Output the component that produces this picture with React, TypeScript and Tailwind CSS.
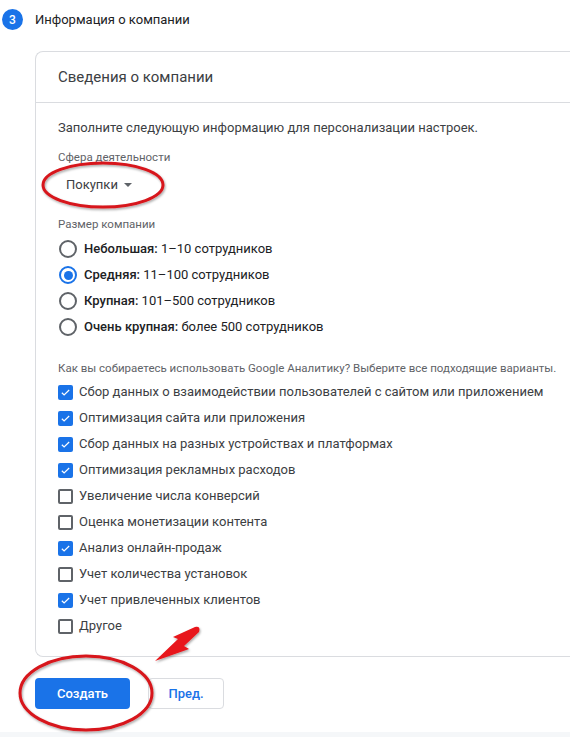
import React from "react";

const sizes = [
  { bold: "Небольшая:", rest: " 1–10 сотрудников", checked: false },
  { bold: "Средняя:", rest: " 11–100 сотрудников", checked: true },
  { bold: "Крупная:", rest: " 101–500 сотрудников", checked: false },
  { bold: "Очень крупная:", rest: " более 500 сотрудников", checked: false },
];

const goals = [
  { label: "Сбор данных о взаимодействии пользователей с сайтом или приложением", checked: true },
  { label: "Оптимизация сайта или приложения", checked: true },
  { label: "Сбор данных на разных устройствах и платформах", checked: true },
  { label: "Оптимизация рекламных расходов", checked: true },
  { label: "Увеличение числа конверсий", checked: false },
  { label: "Оценка монетизации контента", checked: false },
  { label: "Анализ онлайн-продаж", checked: true },
  { label: "Учет количества установок", checked: false },
  { label: "Учет привлеченных клиентов", checked: true },
  { label: "Другое", checked: false },
];

function Radio({ checked }: { checked: boolean }) {
  return (
    <span
      className={`flex h-[18px] w-[18px] shrink-0 items-center justify-center rounded-full border-2 ${
        checked ? "border-[#1a73e8]" : "border-[#5f6368]"
      }`}
    >
      {checked && <span className="h-[9px] w-[9px] rounded-full bg-[#1a73e8]" />}
    </span>
  );
}

function Checkbox({ checked }: { checked: boolean }) {
  if (checked) {
    return (
      <span className="flex h-[15px] w-[15px] shrink-0 items-center justify-center rounded-[2px] bg-[#1a73e8]">
        <svg width="11" height="11" viewBox="0 0 24 24" fill="none">
          <path d="M4 12.5l5 5L20 6.5" stroke="white" strokeWidth="2.6" />
        </svg>
      </span>
    );
  }
  return <span className="h-[15px] w-[15px] shrink-0 rounded-[2px] border-2 border-[#5f6368]" />;
}

export default function App() {
  return (
    <div
      className="relative h-[737px] w-[570px] overflow-hidden bg-white text-[#202124]"
      style={{ fontFamily: "Roboto, 'Noto Sans', sans-serif" }}
    >
      {/* Step header */}
      <div className="flex items-center pt-[9px]">
        <span className="ml-[2px] flex h-[21px] w-[21px] items-center justify-center rounded-full bg-[#1a73e8] text-[12px] font-medium text-white">
          3
        </span>
        <span className="ml-[12px] text-[13px] text-[#202124]">Информация о компании</span>
      </div>

      {/* Card */}
      <div className="ml-[35px] mt-[21px] w-[560px] rounded-l-[8px] border border-r-0 border-[#dadce0]">
        <div className="flex h-[51px] items-center border-b border-[#dadce0] pl-[22px] pt-[1px] text-[15px] text-[#3c4043]">
          Сведения о компании
        </div>

        <div className="pl-[22px] pt-[16px] pb-[21px]">
          <p className="text-[13px] leading-[18px] text-[#3c4043]">
            Заполните следующую информацию для персонализации настроек.
          </p>

          <p className="mt-[13px] text-[11.5px] leading-[14px] text-[#5f6368]">Сфера деятельности</p>
          <div className="ml-[8px] mt-[12px] flex items-center gap-[6px] text-[13px] leading-[18px] text-[#3c4043]">
            Покупки
            <svg width="8" height="5" viewBox="0 0 8 5">
              <path d="M0 0h8L4 4z" fill="#5f6368" />
            </svg>
          </div>

          <p className="mt-[23px] text-[11.5px] leading-[14px] text-[#5f6368]">Размер компании</p>
          <div className="mt-[9px] flex flex-col gap-[8px]">
            {sizes.map((s) => (
              <div key={s.bold} className="flex h-[18px] items-center gap-[7px] pl-[1px] text-[13px] text-[#202124]">
                <Radio checked={s.checked} />
                <span>
                  <span className="font-medium">{s.bold}</span>
                  {s.rest}
                </span>
              </div>
            ))}
          </div>

          <p className="mt-[25px] text-[11.5px] leading-[14px] text-[#5f6368]">
            Как вы собираетесь использовать Google Аналитику? Выберите все подходящие варианты.
          </p>
          <div className="mt-[8px] flex flex-col gap-[8px]">
            {goals.map((g) => (
              <div key={g.label} className="flex h-[18px] items-center gap-[6px] text-[13px] text-[#3c4043]">
                <Checkbox checked={g.checked} />
                <span>{g.label}</span>
              </div>
            ))}
          </div>
        </div>
      </div>

      {/* Buttons */}
      <div className="ml-[35px] mt-[21px] flex gap-[18px]">
        <button className="h-[31px] w-[95px] rounded-[4px] bg-[#1a73e8] text-[13px] font-medium text-white">
          Создать
        </button>
        <button className="h-[31px] w-[76px] rounded-[4px] border border-[#dadce0] bg-white text-[13px] font-medium text-[#1a73e8]">
          Пред.
        </button>
      </div>

      <div className="absolute bottom-0 left-0 h-[5px] w-full bg-[#f5f7f9]" />

      {/* Red annotations */}
      <svg className="pointer-events-none absolute left-0 top-0" width="570" height="737">
        <defs>
          <filter id="sh" x="-20%" y="-20%" width="140%" height="140%">
            <feDropShadow dx="1" dy="1.5" stdDeviation="1" floodColor="#000" floodOpacity="0.35" />
          </filter>
        </defs>
        <ellipse cx="103" cy="185" rx="60" ry="22" fill="none" stroke="#d7141a" strokeWidth="3" filter="url(#sh)" />
        <ellipse cx="86" cy="693" rx="66" ry="37" fill="none" stroke="#d7141a" strokeWidth="3" filter="url(#sh)" />
        <path
          d="M155 661 L178 639 L173 637 L195 627 Q201 626 199 632 L184 646 L189 649 Z"
          fill="#e8141a"
          filter="url(#sh)"
        />
      </svg>
    </div>
  );
}
